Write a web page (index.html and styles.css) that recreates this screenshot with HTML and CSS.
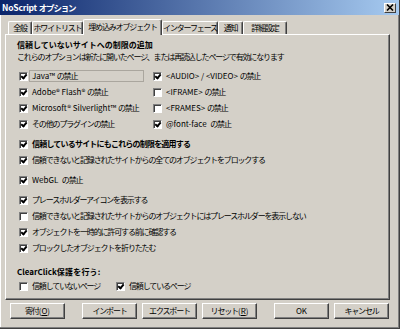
FILE: index.html
```html
<!DOCTYPE html>
<html lang="ja">
<head>
<meta charset="utf-8">
<title>NoScript オプション</title>
<link rel="stylesheet" href="styles.css">
</head>
<body>
<div class="window">
  <div class="titlebar">
    <span class="title"><span class="en">NoScript </span>オプション</span>
    <span class="close"><svg width="8" height="7" viewBox="0 0 8 7"><path d="M1 0.5 L7 6.5 M7 0.5 L1 6.5" stroke="#000" stroke-width="1.6"/></svg></span>
  </div>
  <div class="tabs">
    <div class="tab t1">全般</div>
    <div class="tab t2">ホワイトリスト</div>
    <div class="tab t3 active">埋め込みオブジェクト</div>
    <div class="tab t4">インターフェース</div>
    <div class="tab t5">通知</div>
    <div class="tab t6">詳細設定</div>
  </div>
  <div class="panel">
    <div class="heading">信頼していないサイトへの制限の追加</div>
    <div class="desc">これらのオプションは新たに開いたページ、または再読込したページで有効になります</div>
    <div class="grid">
      <div class="row"><span class="cb on"></span><span class="lbl focus"><span class="en">Java™ </span>の禁止</span></div>
      <div class="row"><span class="cb on"></span><span class="lbl"><span class="en">&lt;AUDIO&gt; / &lt;VIDEO&gt; </span>の禁止</span></div>
      <div class="row"><span class="cb on"></span><span class="lbl"><span class="en">Adobe® Flash® </span>の禁止</span></div>
      <div class="row"><span class="cb"></span><span class="lbl"><span class="en">&lt;IFRAME&gt; </span>の禁止</span></div>
      <div class="row"><span class="cb on"></span><span class="lbl"><span class="en">Microsoft® Silverlight™ </span>の禁止</span></div>
      <div class="row"><span class="cb"></span><span class="lbl"><span class="en">&lt;FRAMES&gt; </span>の禁止</span></div>
      <div class="row"><span class="cb on"></span><span class="lbl">その他のプラグインの禁止</span></div>
      <div class="row"><span class="cb on"></span><span class="lbl"><span class="en">@font-face&nbsp; </span>の禁止</span></div>
    </div>
    <div class="row line sp bold"><span class="cb on"></span><span class="lbl">信頼しているサイトにもこれらの制限を適用する</span></div>
    <div class="row line"><span class="cb on"></span><span class="lbl">信頼できないと記録されたサイトからの全てのオブジェクトをブロックする</span></div>
    <div class="row line sp"><span class="cb on"></span><span class="lbl"><span class="en">WebGL&nbsp; </span>の禁止</span></div>
    <div class="row line sp"><span class="cb on"></span><span class="lbl">プレースホルダーアイコンを表示する</span></div>
    <div class="row line"><span class="cb"></span><span class="lbl">信頼できないと記録されたサイトからのオブジェクトにはプレースホルダーを表示しない</span></div>
    <div class="row line"><span class="cb on"></span><span class="lbl">オブジェクトを一時的に許可する前に確認する</span></div>
    <div class="row line"><span class="cb on"></span><span class="lbl">ブロックしたオブジェクトを折りたたむ</span></div>
    <div class="heading cc"><span class="en">ClearClick</span>保護を行う<span class="en">:</span></div>
    <div class="ccrow">
      <div class="row ccitem"><span class="cb"></span><span class="lbl">信頼していないページ</span></div>
      <div class="row"><span class="cb on"></span><span class="lbl">信頼しているページ</span></div>
    </div>
  </div>
  <div class="buttons">
    <div class="btn">寄付<span class="en">(<u>O</u>)</span></div>
    <div class="btn sep">インポート</div>
    <div class="btn">エクスポート</div>
    <div class="btn">リセット<span class="en">(<u>R</u>)</span></div>
    <div class="btn sep"><span class="en">OK</span></div>
    <div class="btn">キャンセル</div>
  </div>
</div>
</body>
</html>
```

FILE: styles.css
```css
* { box-sizing: border-box; }
html, body { margin: 0; padding: 0; }
body {
  width: 400px;
  height: 329px;
  overflow: hidden;
  background: #d4d0c8;
  font-family: "Noto Sans CJK JP", sans-serif;
  font-size: 8px;
  letter-spacing: -1.15px;
  color: #000;
}
.en { letter-spacing: 0; }
.window {
  width: 400px;
  height: 329px;
  background: #d4d0c8;
  border-right: 1px solid #404040;
  border-bottom: 1px solid #404040;
  box-shadow: inset -1px -1px #808080, inset 1px 0 #ffffff;
  display: flex;
  flex-direction: column;
}
.titlebar {
  height: 15px;
  background: linear-gradient(to right, #0a246a, #a6caf0);
  display: flex;
  align-items: center;
  padding: 0 3px 0 2px;
}
.title {
  color: #fff;
  font-weight: bold;
  font-size: 8.5px;
  line-height: 15px;
  white-space: pre;
}
.title .en { letter-spacing: -0.2px; }
.close {
  margin-left: auto;
  width: 12px;
  height: 10px;
  background: #d4d0c8;
  border-top: 1px solid #fff;
  border-left: 1px solid #fff;
  border-right: 1px solid #404040;
  border-bottom: 1px solid #404040;
  display: flex;
  align-items: center;
  justify-content: center;
}
.close svg { display: block; }
.tabs {
  height: 19px;
  display: flex;
  align-items: flex-end;
  padding-left: 8px;
}
.tab {
  height: 13px;
  line-height: 12px;
  text-align: center;
  white-space: nowrap;
  border-top: 1px solid #fff;
  border-left: 1px solid #fff;
  border-right: 1px solid #404040;
  box-shadow: inset -1px 0 #808080;
  border-radius: 2px 2px 0 0;
  background: #d4d0c8;
}
.t1 { width: 24px; }
.t2 { width: 51px; }
.t3 { width: 79px; }
.t4 { width: 56px; }
.t5 { width: 25px; }
.t6 { width: 44px; }
.tab.active {
  height: 16px;
  margin-bottom: -1px;
  position: relative;
  z-index: 1;
  line-height: 13px;
}
.panel {
  margin: 0 9px 0 5px;
  height: 266px;
  border-top: 1px solid #fff;
  border-left: 1px solid #fff;
  border-right: 1px solid #404040;
  border-bottom: 1px solid #404040;
  box-shadow: inset -1px -1px #808080;
  padding: 4px 0 0 11px;
}
.heading {
  font-weight: bold;
  letter-spacing: 0;
  line-height: 12px;
  height: 12px;
  white-space: pre;
}
.desc {
  line-height: 12px;
  height: 12px;
  white-space: nowrap;
}
.grid {
  margin: 5px 0 0 2px;
  display: grid;
  grid-template-columns: 134px 1fr;
  grid-auto-rows: 16px;
}
.row {
  display: flex;
  align-items: center;
  height: 16px;
  white-space: pre;
}
.line { margin-left: 2px; }
.sp { margin-top: 4px; }
.bold { font-weight: bold; letter-spacing: -0.8px; }
.cb {
  width: 9px;
  height: 9px;
  flex: 0 0 9px;
  background: #fff;
  border-top: 1px solid #808080;
  border-left: 1px solid #808080;
  border-right: 1px solid #fff;
  border-bottom: 1px solid #fff;
  box-shadow: inset 1px 1px #404040;
  position: relative;
}
.cb.on::after {
  content: "";
  position: absolute;
  left: 2px;
  top: 0px;
  width: 2px;
  height: 4px;
  border-right: 2px solid #000;
  border-bottom: 2px solid #000;
  transform: rotate(40deg);
}
.lbl {
  margin-left: 1px;
  padding: 0 2px;
  border: 1px solid transparent;
  line-height: 10px;
  height: 12px;
}
.lbl.focus {
  width: 115px;
  border-color: #aaa69e;
}
.heading.cc { margin-top: 10px; letter-spacing: 0.2px; }
.ccrow {
  display: flex;
  margin-left: 2px;
}
.ccitem { width: 97px; }
.buttons {
  display: flex;
  margin-top: 3px;
  padding-left: 10px;
}
.btn {
  width: 55px;
  height: 16px;
  line-height: 13px;
  text-align: center;
  white-space: nowrap;
  border-top: 1px solid #fff;
  border-left: 1px solid #fff;
  border-right: 1px solid #404040;
  border-bottom: 1px solid #404040;
  box-shadow: inset -1px -1px #808080;
  margin-left: 5px;
}
.btn:first-child { margin-left: 0; }
.btn.sep { margin-left: 17px; }
```
